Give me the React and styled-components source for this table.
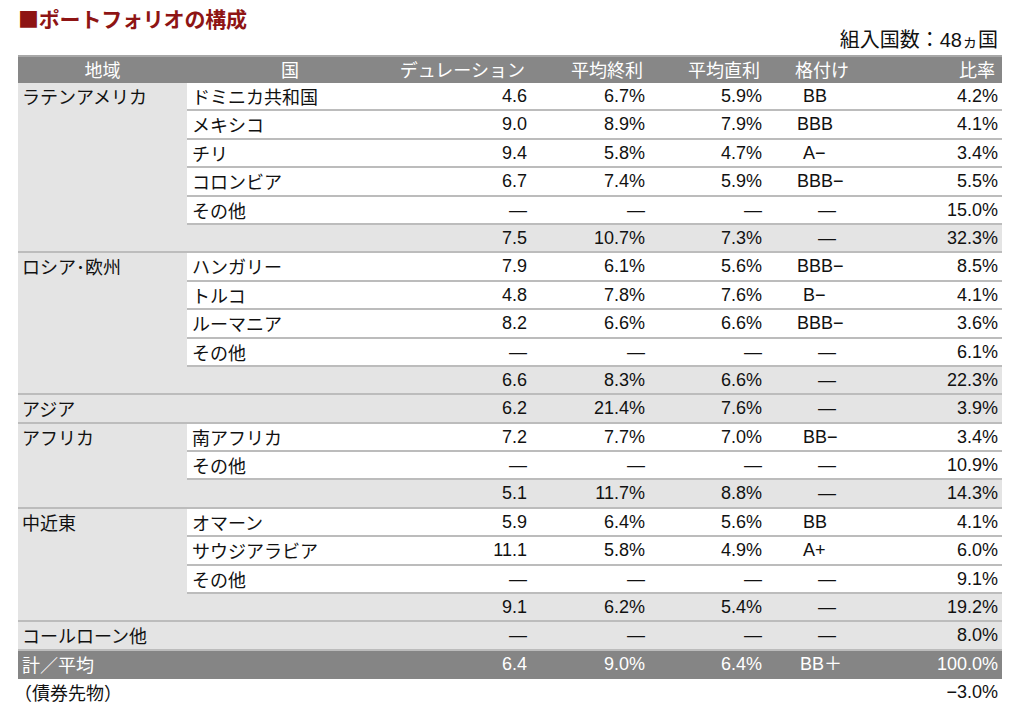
import styled, { createGlobalStyle } from "styled-components";

const GlobalStyle = createGlobalStyle`
  body {
    margin: 0;
    background: #ffffff;
    font-family: "Liberation Sans", "Noto Sans CJK JP", sans-serif;
    color: #111111;
  }
`;

const Page = styled.div`
  width: 984px;
  padding: 0 22px 0 18px;
`;

const Title = styled.h1`
  margin: 0;
  height: 30px;
  padding-top: 6px;
  box-sizing: border-box;
  font-family: "Noto Sans CJK JP", sans-serif;
  font-size: 21px;
  line-height: 25px;
  font-weight: 700;
  color: #8e1414;
  letter-spacing: -0.2px;
`;

const Count = styled.div`
  height: 25px;
  text-align: right;
  padding-right: 4px;
  font-family: "Liberation Sans", "Noto Sans CJK JP", sans-serif;
  font-size: 20px;
  line-height: 20px;
`;

const Small = styled.span`
  font-size: 16px;
`;

const COLS = "206px 139px 118px 117px 113px 122px";

const Header = styled.div`
  display: grid;
  grid-template-columns: 169px ${COLS};
  height: 28px;
  background: #878787;
  border-top: 2px solid #a8a8a8;
  box-sizing: border-box;
  color: #ffffff;
  font-family: "Noto Sans CJK JP", sans-serif;
  font-size: 18px;
  line-height: 25px;
`;

const HeadCell = styled.div`
  text-align: ${(p) => p.$align || "right"};
  padding: ${(p) => (p.$align === "left" ? "0 0 0 28px" : p.$align === "center" ? "0" : "0 7px 0 0")};
  white-space: nowrap;
`;

const Group = styled.div`
  display: flex;
  background: ${(p) => (p.$dark ? "#858585" : "#e4e4e4")};
  color: ${(p) => (p.$dark ? "#ffffff" : "#111111")};
`;

const RegionCell = styled.div`
  width: 169px;
  flex: none;
  box-sizing: border-box;
  padding-left: 4px;
  border-bottom: 2px solid ${(p) => (p.$last ? "transparent" : "#bcbcbc")};
  font-family: "Noto Sans CJK JP", sans-serif;
  font-size: 18px;
  line-height: 26.4px;
  white-space: nowrap;
`;

const Rows = styled.div`
  flex: 1;
  display: flex;
  flex-direction: column;
`;

const Row = styled.div`
  display: grid;
  grid-template-columns: ${COLS};
  height: 28.4px;
  box-sizing: border-box;
  border-bottom: 2px solid ${(p) => (p.$last ? "transparent" : "#bcbcbc")};
  background: ${(p) => (p.$white ? "#ffffff" : "transparent")};
  font-size: 18px;
  line-height: 26.4px;
`;

const Country = styled.div`
  padding-left: 5px;
  font-family: "Noto Sans CJK JP", sans-serif;
  white-space: nowrap;
`;

const Num = styled.div`
  text-align: right;
  padding-right: ${(p) => p.$pad || 5}px;
  white-space: nowrap;
`;

const Rating = styled.div`
  padding-left: ${(p) => p.$indent}px;
  white-space: nowrap;
`;

const Footer = styled.div`
  display: flex;
  justify-content: space-between;
  height: 27px;
  font-size: 18px;
  line-height: 26px;
  padding-right: 4px;
`;

const FootLabel = styled.span`
  font-family: "Noto Sans CJK JP", sans-serif;
  margin-left: -4px;
`;

const groups = [
  {
    region: "ラテンアメリカ",
    rows: [
      ["ドミニカ共和国", "4.6", "6.7%", "5.9%", "BB", "4.2%"],
      ["メキシコ", "9.0", "8.9%", "7.9%", "BBB", "4.1%"],
      ["チリ", "9.4", "5.8%", "4.7%", "A−", "3.4%"],
      ["コロンビア", "6.7", "7.4%", "5.9%", "BBB−", "5.5%"],
      ["その他", "—", "—", "—", "—", "15.0%"],
    ],
    sub: ["7.5", "10.7%", "7.3%", "—", "32.3%"],
  },
  {
    region: "ロシア･欧州",
    rows: [
      ["ハンガリー", "7.9", "6.1%", "5.6%", "BBB−", "8.5%"],
      ["トルコ", "4.8", "7.8%", "7.6%", "B−", "4.1%"],
      ["ルーマニア", "8.2", "6.6%", "6.6%", "BBB−", "3.6%"],
      ["その他", "—", "—", "—", "—", "6.1%"],
    ],
    sub: ["6.6", "8.3%", "6.6%", "—", "22.3%"],
  },
  { region: "アジア", rows: [], sub: ["6.2", "21.4%", "7.6%", "—", "3.9%"] },
  {
    region: "アフリカ",
    rows: [
      ["南アフリカ", "7.2", "7.7%", "7.0%", "BB−", "3.4%"],
      ["その他", "—", "—", "—", "—", "10.9%"],
    ],
    sub: ["5.1", "11.7%", "8.8%", "—", "14.3%"],
  },
  {
    region: "中近東",
    rows: [
      ["オマーン", "5.9", "6.4%", "5.6%", "BB", "4.1%"],
      ["サウジアラビア", "11.1", "5.8%", "4.9%", "A+", "6.0%"],
      ["その他", "—", "—", "—", "—", "9.1%"],
    ],
    sub: ["9.1", "6.2%", "5.4%", "—", "19.2%"],
  },
  { region: "コールローン他", rows: [], sub: ["—", "—", "—", "—", "8.0%"] },
];

const total = ["6.4", "9.0%", "6.4%", "BB＋", "100.0%"];

const indentFor = (r) => {
  if (r === "—") return 51;
  if (r.startsWith("BBB")) return 30;
  if (r === "BB＋") return 33;
  return 36;
};

const Values = ({ vals }) => (
  <>
    <Num>{vals[0]}</Num>
    <Num>{vals[1]}</Num>
    <Num>{vals[2]}</Num>
    <Rating $indent={indentFor(vals[3])}>{vals[3]}</Rating>
    <Num $pad={4}>{vals[4]}</Num>
  </>
);

export default function App() {
  return (
    <Page>
      <GlobalStyle />
      <Title>■ポートフォリオの構成</Title>
      <Count>
        組入国数：48<Small>ヵ</Small>国
      </Count>
      <Header>
        <HeadCell $align="center">地域</HeadCell>
        <HeadCell $align="center">国</HeadCell>
        <HeadCell>デュレーション</HeadCell>
        <HeadCell>平均終利</HeadCell>
        <HeadCell>平均直利</HeadCell>
        <HeadCell $align="left">格付け</HeadCell>
        <HeadCell>比率</HeadCell>
      </Header>
      {groups.map((g) => (
        <Group key={g.region}>
          <RegionCell>{g.region}</RegionCell>
          <Rows>
            {g.rows.map((r) => (
              <Row key={r[0]} $white>
                <Country>{r[0]}</Country>
                <Values vals={r.slice(1)} />
              </Row>
            ))}
            <Row>
              <Country />
              <Values vals={g.sub} />
            </Row>
          </Rows>
        </Group>
      ))}
      <Group $dark>
        <RegionCell $last>計／平均</RegionCell>
        <Rows>
          <Row $last>
            <Country />
            <Values vals={total} />
          </Row>
        </Rows>
      </Group>
      <Footer>
        <FootLabel>（債券先物）</FootLabel>
        <span>−3.0%</span>
      </Footer>
    </Page>
  );
}
